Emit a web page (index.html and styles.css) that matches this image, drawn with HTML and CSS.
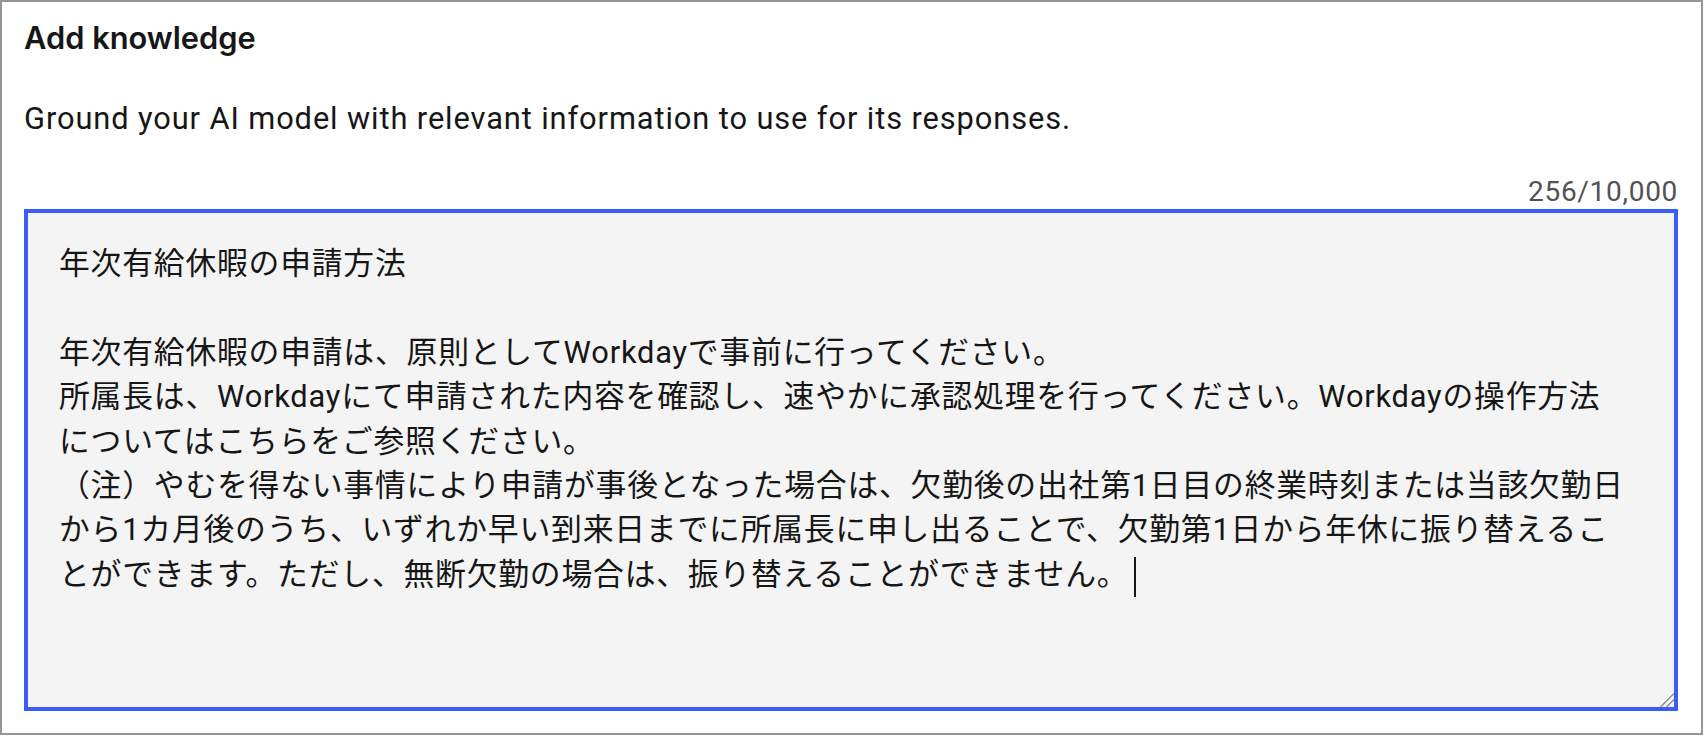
FILE: index.html
```html
<!DOCTYPE html>
<html lang="ja">
<head>
<meta charset="utf-8">
<title>Add knowledge</title>
<link rel="stylesheet" href="styles.css">
</head>
<body>
<div class="frame">
  <h2 class="title">Add knowledge</h2>
  <p class="desc">Ground your AI model with relevant information to use for its responses.</p>
  <div class="counter">256/10,000</div>
  <div class="field">
    <div class="line">年次有給休暇の申請方法</div>
    <div class="line"></div>
    <div class="line">年次有給休暇の申請は、原則としてWorkdayで事前に行ってください。</div>
    <div class="line">所属長は、Workdayにて申請された内容を確認し、速やかに承認処理を行ってください。Workdayの操作方法</div>
    <div class="line">についてはこちらをご参照ください。</div>
    <div class="line">（注）やむを得ない事情により申請が事後となった場合は、欠勤後の出社第1日目の終業時刻または当該欠勤日</div>
    <div class="line">から1カ月後のうち、いずれか早い到来日までに所属長に申し出ることで、欠勤第1日から年休に振り替えるこ</div>
    <div class="line">とができます。ただし、無断欠勤の場合は、振り替えることができません。<span class="caret"></span></div>
    <svg class="grip" width="14" height="14" viewBox="0 0 14 14">
      <line x1="0.5" y1="14" x2="14" y2="0.5" stroke="#8a8a8a" stroke-width="1.4"/>
      <line x1="6.5" y1="14" x2="14" y2="6.5" stroke="#8a8a8a" stroke-width="1.4"/>
    </svg>
  </div>
</div>
</body>
</html>
```
FILE: styles.css
```css
html, body {
  margin: 0;
  padding: 0;
  background: #ffffff;
}

.frame {
  box-sizing: border-box;
  width: 1703px;
  height: 735px;
  border: 2px solid #959595;
  padding: 16px 23px 0 22px;
  background: #ffffff;
  color: #161616;
}

.title {
  margin: 0;
  font-family: Inter, "Liberation Sans", sans-serif;
  font-weight: 600;
  font-size: 30.8px;
  line-height: 40px;
  color: #161616;
}

.desc {
  margin: 39px 0 0;
  font-family: Roboto, "Liberation Sans", sans-serif;
  font-weight: 400;
  font-size: 30.8px;
  line-height: 44px;
  letter-spacing: 0.9px;
  color: #161616;
}

.counter {
  margin-top: 34px;
  text-align: right;
  font-family: Roboto, "Liberation Sans", sans-serif;
  font-size: 28px;
  line-height: 34px;
  letter-spacing: 0.7px;
  color: #525252;
}

.field {
  position: relative;
  box-sizing: border-box;
  height: 502px;
  border: 4px solid #3b5cfa;
  background: #f4f4f4;
  padding: 29px 31px 0;
  font-family: Roboto, "Noto Sans CJK JP", sans-serif;
  font-size: 30.8px;
  letter-spacing: 0.8px;
  color: #161616;
}

.line {
  height: 44.4px;
  line-height: 44.4px;
  white-space: nowrap;
}

.caret {
  display: inline-block;
  width: 2px;
  height: 40px;
  margin-left: 6px;
  background: #161616;
  vertical-align: middle;
}

.grip {
  position: absolute;
  right: 0;
  bottom: 0;
}
```
